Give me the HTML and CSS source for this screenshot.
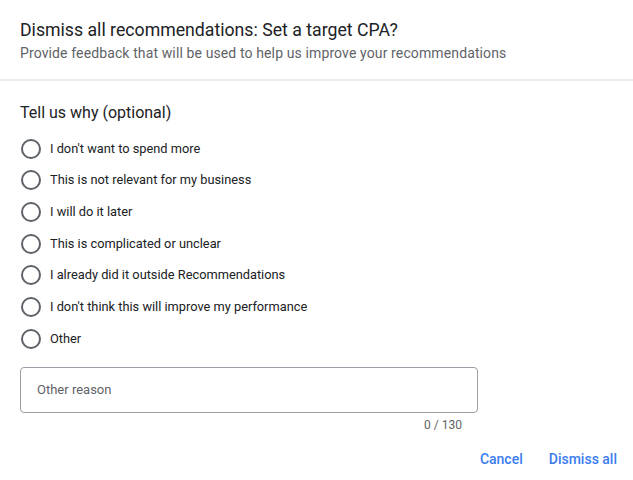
FILE: index.html
```html
<!DOCTYPE html>
<html>
<head>
<meta charset="utf-8">
<link rel="stylesheet" href="styles.css">
</head>
<body>
<div class="dialog">
  <header class="header">
    <h1 class="title">Dismiss all recommendations: Set a target CPA?</h1>
    <p class="subtitle">Provide feedback that will be used to help us improve your recommendations</p>
  </header>
  <section class="content">
    <h2 class="question">Tell us why (optional)</h2>
    <ul class="options">
      <li class="option"><span class="radio"></span><span class="label">I don't want to spend more</span></li>
      <li class="option"><span class="radio"></span><span class="label">This is not relevant for my business</span></li>
      <li class="option"><span class="radio"></span><span class="label">I will do it later</span></li>
      <li class="option"><span class="radio"></span><span class="label">This is complicated or unclear</span></li>
      <li class="option"><span class="radio"></span><span class="label">I already did it outside Recommendations</span></li>
      <li class="option"><span class="radio"></span><span class="label">I don't think this will improve my performance</span></li>
      <li class="option"><span class="radio"></span><span class="label">Other</span></li>
    </ul>
    <div class="field">
      <div class="input">Other reason</div>
      <div class="counter">0 / 130</div>
    </div>
  </section>
  <footer class="actions">
    <button class="btn">Cancel</button>
    <button class="btn">Dismiss all</button>
  </footer>
</div>
</body>
</html>
```
FILE: styles.css
```css
html, body {
  margin: 0;
  padding: 0;
  background: #ffffff;
}
body {
  font-family: Roboto, "Liberation Sans", Arial, sans-serif;
  color: #202124;
}
.dialog {
  width: 633px;
}
.header {
  padding: 18px 20px 16px;
  border-bottom: 2px solid #ebebeb;
}
.title {
  margin: 0;
  font-size: 17.7px;
  line-height: 24px;
  font-weight: 400;
  color: #202124;
}
.subtitle {
  margin: 1px 0 0;
  font-size: 14px;
  line-height: 20px;
  color: #5f6368;
  letter-spacing: 0.12px;
}
.content {
  padding: 20px 20px 0;
}
.question {
  margin: 0;
  font-size: 16px;
  line-height: 24px;
  font-weight: 400;
  color: #202124;
}
.options {
  list-style: none;
  margin: 8px 0 0;
  padding: 0;
}
.option {
  display: flex;
  align-items: center;
  height: 31.67px;
}
.radio {
  box-sizing: border-box;
  width: 20px;
  height: 20px;
  border: 2px solid #5f6368;
  border-radius: 50%;
  margin-left: 1px;
  flex: none;
}
.label {
  margin-left: 9px;
  font-size: 12.8px;
  line-height: 20px;
  color: #202124;
}
.field {
  margin-top: 12px;
  width: 458px;
}
.input {
  box-sizing: border-box;
  height: 46px;
  border: 1px solid #9aa0a6;
  border-radius: 4px;
  padding: 0 16px;
  display: flex;
  align-items: center;
  font-size: 13px;
  color: #5f6368;
}
.counter {
  text-align: right;
  padding-right: 16px;
  margin-top: 4px;
  font-size: 12px;
  line-height: 16px;
  color: #5f6368;
}
.actions {
  display: flex;
  justify-content: flex-end;
  gap: 10px;
  padding: 8px 8px 0;
}
.btn {
  background: none;
  border: none;
  padding: 8px 8px;
  font-family: Roboto, "Liberation Sans", Arial, sans-serif;
  font-size: 14px;
  line-height: 20px;
  font-weight: 500;
  color: #3b7ded;
}
```
